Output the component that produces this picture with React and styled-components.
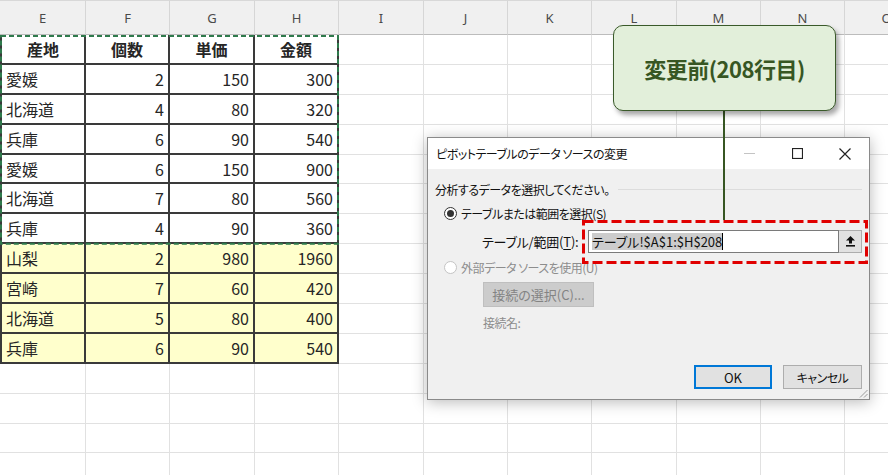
import React from "react";
import styled, { createGlobalStyle } from "styled-components";

const GlobalStyle = createGlobalStyle`
  html, body {
    margin: 0;
    padding: 0;
    background: #fff;
    overflow: hidden;
  }
`;

const jp = `"Noto Sans CJK JP", "Noto Sans", sans-serif`;

const columns = ["E", "F", "G", "H", "I", "J", "K", "L", "M", "N", "O"];
const colWidths = [86, 84, 85, 84, 85, 84, 84, 85, 84, 84, 84];

const headRow = ["産地", "個数", "単価", "金額"];
const dataRows = [
  ["愛媛", 2, 150, 300],
  ["北海道", 4, 80, 320],
  ["兵庫", 6, 90, 540],
  ["愛媛", 6, 150, 900],
  ["北海道", 7, 80, 560],
  ["兵庫", 4, 90, 360],
  ["山梨", 2, 980, 1960, true],
  ["宮崎", 7, 60, 420, true],
  ["北海道", 5, 80, 400, true],
  ["兵庫", 6, 90, 540, true],
];
const ROW_H = 29.9;
const TOTAL_ROWS = 15;

const App = () => {
  const rows = [];
  for (let r = 0; r < TOTAL_ROWS; r++) {
    let values = null;
    let isHead = false;
    let yellow = false;
    if (r === 0) {
      values = headRow;
      isHead = true;
    } else if (r <= dataRows.length) {
      values = dataRows[r - 1].slice(0, 4);
      yellow = !!dataRows[r - 1][4];
    }
    rows.push({ values, isHead, yellow });
  }

  return (
    <Page>
      <GlobalStyle />
      <Sheet>
        {columns.map((c) => (
          <ColHead key={c}>{c}</ColHead>
        ))}
        {rows.map((row, r) =>
          columns.map((c, i) => {
            const inTable = row.values && i < 4;
            if (!inTable) return <Cell key={c + r} />;
            const v = row.values[i];
            const align = row.isHead ? "center" : i === 0 ? "left" : "right";
            return (
              <Cell
                key={c + r}
                $table
                $edge={i === 0}
                $bold={row.isHead}
                $align={align}
                $fill={row.yellow ? "#ffffcc" : "#fff"}
              >
                {v}
              </Cell>
            );
          })
        )}
        <Marquee>
          <svg width="339" height={7 * ROW_H + 1}>
            <rect
              x="1"
              y="1"
              width="337"
              height={7 * ROW_H - 1.5}
              fill="none"
              stroke="#2f7a4c"
              strokeWidth="2"
              strokeDasharray="5 3"
            />
          </svg>
        </Marquee>
      </Sheet>

      <Dialog>
        <TitleBar>
          <Title>ピボットテーブルのデータ ソースの変更</Title>
          <WinButtons>
            <WinButton>
              <svg width="11" height="11">
                <line x1="0" y1="5.5" x2="11" y2="5.5" stroke="#c4c4c4" strokeWidth="1" />
              </svg>
            </WinButton>
            <WinButton>
              <svg width="11" height="11">
                <rect x="0.5" y="0.5" width="10" height="10" fill="none" stroke="#222" strokeWidth="1.2" />
              </svg>
            </WinButton>
            <WinButton>
              <svg width="12" height="12">
                <path d="M0.5 0.5 L11.5 11.5 M11.5 0.5 L0.5 11.5" stroke="#222" strokeWidth="1.2" />
              </svg>
            </WinButton>
          </WinButtons>
        </TitleBar>
        <Body>
          <SectionRow>
            <span>分析するデータを選択してください。</span>
            <Rule />
          </SectionRow>
          <RadioRow>
            <Radio $checked />
            <span>テーブルまたは範囲を選択(S)</span>
          </RadioRow>
          <FieldRow>
            <FieldLabel>
              テーブル/範囲(<u>T</u>):
            </FieldLabel>
            <RangeInput>
              <Selected>テーブル!$A$1:$H$208</Selected>
              <Caret />
            </RangeInput>
            <CollapseButton>
              <svg width="11" height="12" viewBox="0 0 11 12">
                <path d="M5.5 1 L10 5.6 H7 V8.6 H4 V5.6 H1 Z" fill="#111" />
                <rect x="1" y="10" width="9" height="1.6" fill="#111" />
              </svg>
            </CollapseButton>
          </FieldRow>
          <RadioRow $disabled $height={20}>
            <Radio $disabled />
            <span>外部データ ソースを使用(U)</span>
          </RadioRow>
          <PushButton $disabled $wide $indent={48} $width={111} $h={25} $top={5}>
            接続の選択(C)...
          </PushButton>
          <ConnName>接続名:</ConnName>
          <Footer>
            <PushButton $default $wide $width={78} $h={24}>
              OK
            </PushButton>
            <PushButton $width={79} $h={24}>
              キャンセル
            </PushButton>
          </Footer>
        </Body>
        <Grip>
          <svg width="11" height="11">
            <path d="M10.5 3 L3 10.5 M10.5 7 L7 10.5" stroke="#9a9a9a" strokeWidth="1" />
          </svg>
        </Grip>
      </Dialog>

      <Connector />
      <Callout>変更前(208行目)</Callout>
      <Highlight>
        <svg width="286" height="44">
          <rect
            x="1.5"
            y="1.5"
            width="283"
            height="41"
            fill="none"
            stroke="#e00000"
            strokeWidth="3"
            strokeDasharray="10 4"
          />
        </svg>
      </Highlight>
    </Page>
  );
};

export default App;

const Page = styled.div`
  position: relative;
  width: 888px;
  height: 475px;
  overflow: hidden;
  background: #fff;
  font-family: ${jp};
`;

const Sheet = styled.div`
  position: relative;
  display: grid;
  grid-template-columns: ${colWidths.map((w) => w + "px").join(" ")};
  grid-template-rows: 35px repeat(${TOTAL_ROWS}, ${ROW_H}px);
`;

const ColHead = styled.div`
  box-sizing: border-box;
  display: flex;
  align-items: center;
  justify-content: center;
  background: #f0f0f0;
  border-top: 1px solid #d8d8d8;
  border-right: 1px solid #d6d6d6;
  border-bottom: 1px solid #bcbcbc;
  color: #4a4a4a;
  font-family: "Noto Sans", sans-serif;
  font-size: 13px;
  padding-top: 1px;
`;

const Cell = styled.div`
  box-sizing: border-box;
  display: flex;
  align-items: center;
  justify-content: ${(p) =>
    p.$align === "right" ? "flex-end" : p.$align === "center" ? "center" : "flex-start"};
  padding: 0 4px;
  background: ${(p) => p.$fill || "#fff"};
  border-right: ${(p) => (p.$table ? "2px solid #3a3a3a" : "1px solid #e1e1e1")};
  border-bottom: ${(p) => (p.$table ? "2px solid #3a3a3a" : "1px solid #e1e1e1")};
  border-left: ${(p) => (p.$edge ? "2px solid #3a3a3a" : "none")};
  color: #262626;
  font-size: 16px;
  font-weight: ${(p) => (p.$bold ? 700 : 400)};
  white-space: nowrap;
`;

const Marquee = styled.div`
  position: absolute;
  grid-column: 1 / 5;
  grid-row: 2 / 9;
  left: 0;
  top: 0;
  pointer-events: none;
  svg {
    display: block;
  }
`;

const Dialog = styled.div`
  position: absolute;
  left: 427px;
  top: 137px;
  width: 443px;
  height: 263px;
  box-sizing: border-box;
  display: flex;
  flex-direction: column;
  border: 1px solid #8a8a8a;
  background: #f0f0f0;
  box-shadow: 0 2px 14px rgba(0, 0, 0, 0.28);
  font-family: ${jp};
  font-feature-settings: "palt";
  font-size: 12px;
  letter-spacing: -0.5px;
  color: #111;
`;

const TitleBar = styled.div`
  height: 31px;
  flex: none;
  display: flex;
  align-items: center;
  background: #fff;
  padding-left: 8px;
`;

const Title = styled.div`
  flex: 1;
  color: #111;
`;

const WinButtons = styled.div`
  display: flex;
  height: 100%;
`;

const WinButton = styled.div`
  width: 48px;
  display: flex;
  align-items: center;
  justify-content: center;
  svg {
    display: block;
  }
`;

const Body = styled.div`
  flex: 1;
  display: flex;
  flex-direction: column;
  padding: 8px 7px 10px 7px;
`;

const SectionRow = styled.div`
  height: 24px;
  display: flex;
  align-items: center;
`;

const Rule = styled.div`
  flex: 1;
  height: 1px;
  background: #dcdcdc;
  margin-left: 8px;
`;

const RadioRow = styled.div`
  height: ${(p) => p.$height || 24}px;
  display: flex;
  align-items: center;
  gap: 4px;
  padding-left: 9px;
  color: ${(p) => (p.$disabled ? "#8d8d8d" : "#111")};
`;

const Radio = styled.span`
  width: 13px;
  height: 13px;
  box-sizing: border-box;
  border-radius: 50%;
  border: 1px solid ${(p) => (p.$disabled ? "#c4c4c4" : "#333")};
  background: #fff;
  display: flex;
  align-items: center;
  justify-content: center;
  &::after {
    content: "";
    width: 7px;
    height: 7px;
    border-radius: 50%;
    background: ${(p) => (p.$checked ? "#333" : "transparent")};
  }
`;

const FieldRow = styled.div`
  height: 32px;
  display: flex;
  align-items: center;
`;

const FieldLabel = styled.div`
  width: 95px;
  margin-left: 47px;
  margin-right: 11px;
  text-align: right;
  white-space: nowrap;
  font-size: 13px;
  letter-spacing: -0.2px;
  u {
    text-underline-offset: 2px;
  }
`;

const RangeInput = styled.div`
  width: 251px;
  height: 23px;
  box-sizing: border-box;
  border: 1px solid #7a7a7a;
  background: #fff;
  display: flex;
  align-items: center;
  padding-left: 3px;
  font-size: 13px;
  letter-spacing: 0;
`;

const Selected = styled.span`
  background: #cccccc;
  color: #111;
  line-height: 17px;
`;

const Caret = styled.span`
  width: 1px;
  height: 17px;
  background: #000;
`;

const CollapseButton = styled.div`
  width: 23px;
  height: 23px;
  box-sizing: border-box;
  border: 1px solid #adadad;
  border-left: none;
  background: #e1e1e1;
  display: flex;
  align-items: center;
  justify-content: center;
  svg {
    display: block;
  }
`;

const PushButton = styled.div`
  width: ${(p) => p.$width}px;
  height: ${(p) => p.$h}px;
  margin-left: ${(p) => p.$indent || 0}px;
  margin-top: ${(p) => p.$top || 0}px;
  box-sizing: border-box;
  display: flex;
  align-items: center;
  justify-content: center;
  background: ${(p) => (p.$disabled ? "#cccccc" : "#e1e1e1")};
  border: ${(p) =>
    p.$default ? "2px solid #0078d7" : p.$disabled ? "1px solid #bfbfbf" : "1px solid #adadad"};
  color: ${(p) => (p.$disabled ? "#838383" : "#111")};
  font-size: ${(p) => (p.$wide ? 13 : 12)}px;
  letter-spacing: ${(p) => (p.$wide ? 0 : -0.5)}px;
  white-space: nowrap;
`;

const ConnName = styled.div`
  height: 24px;
  margin-top: 3px;
  margin-left: 48px;
  display: flex;
  align-items: center;
  color: #8d8d8d;
`;

const Footer = styled.div`
  margin-top: auto;
  display: flex;
  justify-content: flex-end;
  gap: 11px;
`;

const Grip = styled.div`
  position: absolute;
  right: 1px;
  bottom: 1px;
  svg {
    display: block;
  }
`;

const Callout = styled.div`
  position: absolute;
  left: 613px;
  top: 25px;
  width: 223px;
  height: 86px;
  box-sizing: border-box;
  display: flex;
  align-items: center;
  justify-content: center;
  border: 1.5px solid #3a5a2a;
  border-radius: 10px;
  background: #e2efda;
  box-shadow: 3px 4px 5px rgba(0, 0, 0, 0.35);
  color: #375623;
  font-family: ${jp};
  font-weight: 700;
  font-size: 22px;
  letter-spacing: -0.5px;
`;

const Connector = styled.div`
  position: absolute;
  left: 723px;
  top: 110px;
  width: 2px;
  height: 110px;
  background: #375623;
`;

const Highlight = styled.div`
  position: absolute;
  left: 582px;
  top: 220px;
  pointer-events: none;
  svg {
    display: block;
  }
`;
